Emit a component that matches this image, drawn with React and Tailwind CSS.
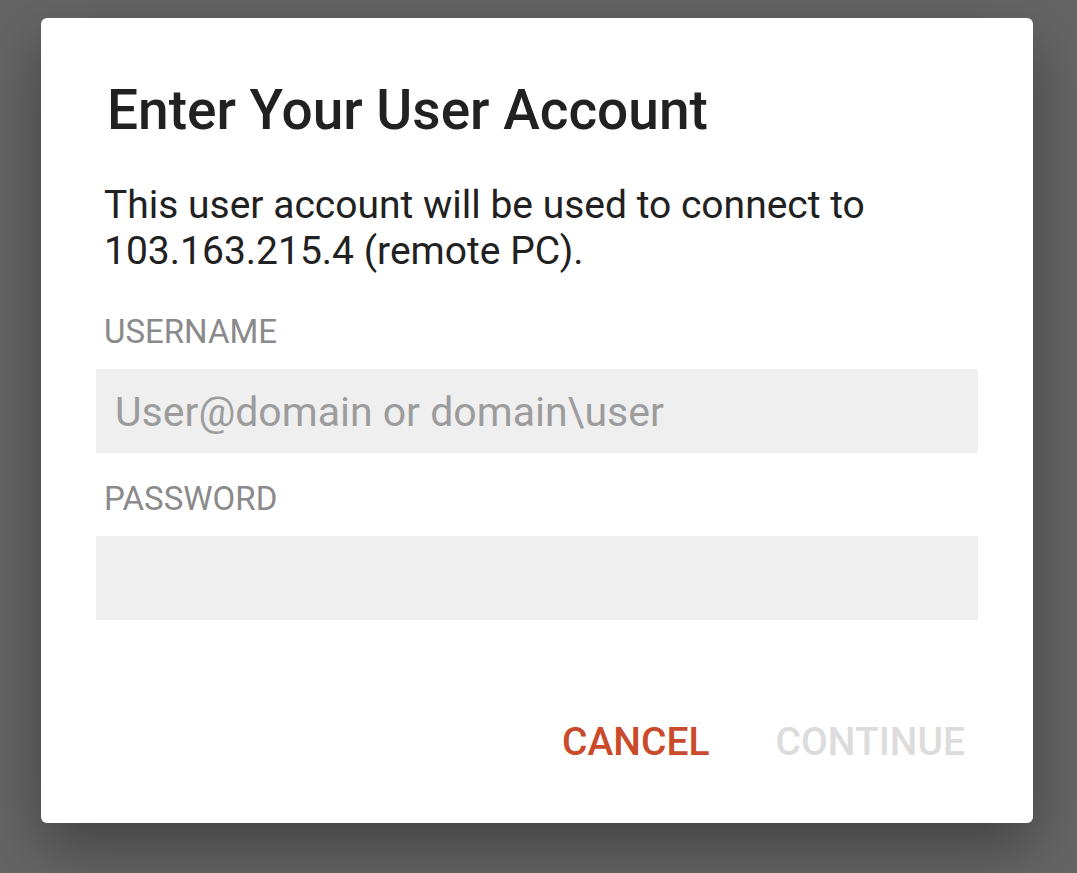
import React from 'react';

function Field({ label, placeholder, type = 'text' }) {
  return (
    <div className="flex flex-col">
      <label className="px-[8px] text-[33px] leading-[40px] text-[#8a8a8a] uppercase">{label}</label>
      <input
        type={type}
        placeholder={placeholder}
        className="mt-[17px] h-[84px] w-full bg-[#efefef] px-[19px] pt-[2px] text-[41px] text-[#212121] placeholder:text-[#9c9c9c] outline-none"
      />
    </div>
  );
}

export default function App() {
  return (
    <div
      className="min-h-[873px] w-full bg-[#656565] pt-[18px] pl-[41px]"
      style={{ fontFamily: 'Roboto, "Noto Sans", sans-serif' }}
    >
      <div className="w-[992px] rounded-[6px] bg-white px-[55px] pt-[60px] pb-[59px] shadow-[0_24px_60px_rgba(0,0,0,0.35)]">
        <h1 className="pl-[11px] text-[55px] leading-[64px] font-medium text-[#212121]">
          Enter Your User Account
        </h1>
        <p className="mt-[40px] px-[8px] text-[39px] leading-[46px] text-[#212121]">
          This user account will be used to connect to
          <br />
          103.163.215.4 (remote PC).
        </p>
        <div className="mt-[38px] flex flex-col gap-[26px]">
          <Field label="Username" placeholder="User@domain or domain\user" />
          <Field label="Password" type="password" />
        </div>
        <div className="mt-[100px] flex justify-end gap-[66px] pr-[13px]">
          <button className="text-[39px] leading-[44px] font-medium text-[#c94b2b]">CANCEL</button>
          <button className="text-[39px] leading-[44px] font-medium text-[#dcdcdc]" disabled>
            CONTINUE
          </button>
        </div>
      </div>
    </div>
  );
}
